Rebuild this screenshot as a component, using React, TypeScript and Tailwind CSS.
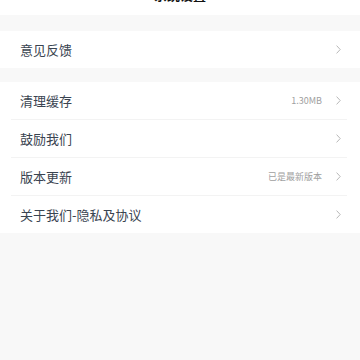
function Chevron() {
  return (
    <svg width="5" height="9" viewBox="0 0 5 9" className="shrink-0">
      <path d="M0.6 0.6 L4.2 4.5 L0.6 8.4" fill="none" stroke="#b0b0b0" strokeWidth="0.9" />
    </svg>
  );
}

interface Row {
  readonly label: string;
  readonly value?: string;
}

const GROUP: readonly Row[] = [
  { label: '清理缓存', value: '1.30MB' },
  { label: '鼓励我们' },
  { label: '版本更新', value: '已是最新版本' },
  { label: '关于我们-隐私及协议' },
];

function SettingRow({ row }: { readonly row: Row }) {
  return (
    <div className="h-[37px] flex items-center pl-[20px] pr-[19px] bg-white">
      <span className="flex-1 text-[13px] text-[#3a4451] leading-none">{row.label}</span>
      {row.value && (
        <span className="text-[9px] text-[#a0a0a0] mr-[14px] leading-none">{row.value}</span>
      )}
      <Chevron />
    </div>
  );
}

export default function App() {
  return (
    <div className="w-[360px] h-[360px] overflow-hidden bg-[#f8f8f8] font-['Noto_Sans_CJK_SC','Noto_Sans',sans-serif]">
      <div className="h-[15px] bg-white overflow-hidden flex justify-center">
        <span className="-mt-[14px] text-[13px] font-bold leading-[18px] text-[#111]">系统设置</span>
      </div>
      <div className="h-[16px]" />
      <SettingRow row={{ label: '意见反馈' }} />
      <div className="h-[14px]" />
      <div className="bg-white">
        {GROUP.map((row, i) => (
          <div key={row.label}>
            {i > 0 && <div className="h-px ml-[11px] mr-[13px] bg-[#f3f3f3]" />}
            <SettingRow row={row} />
          </div>
        ))}
      </div>
    </div>
  );
}
